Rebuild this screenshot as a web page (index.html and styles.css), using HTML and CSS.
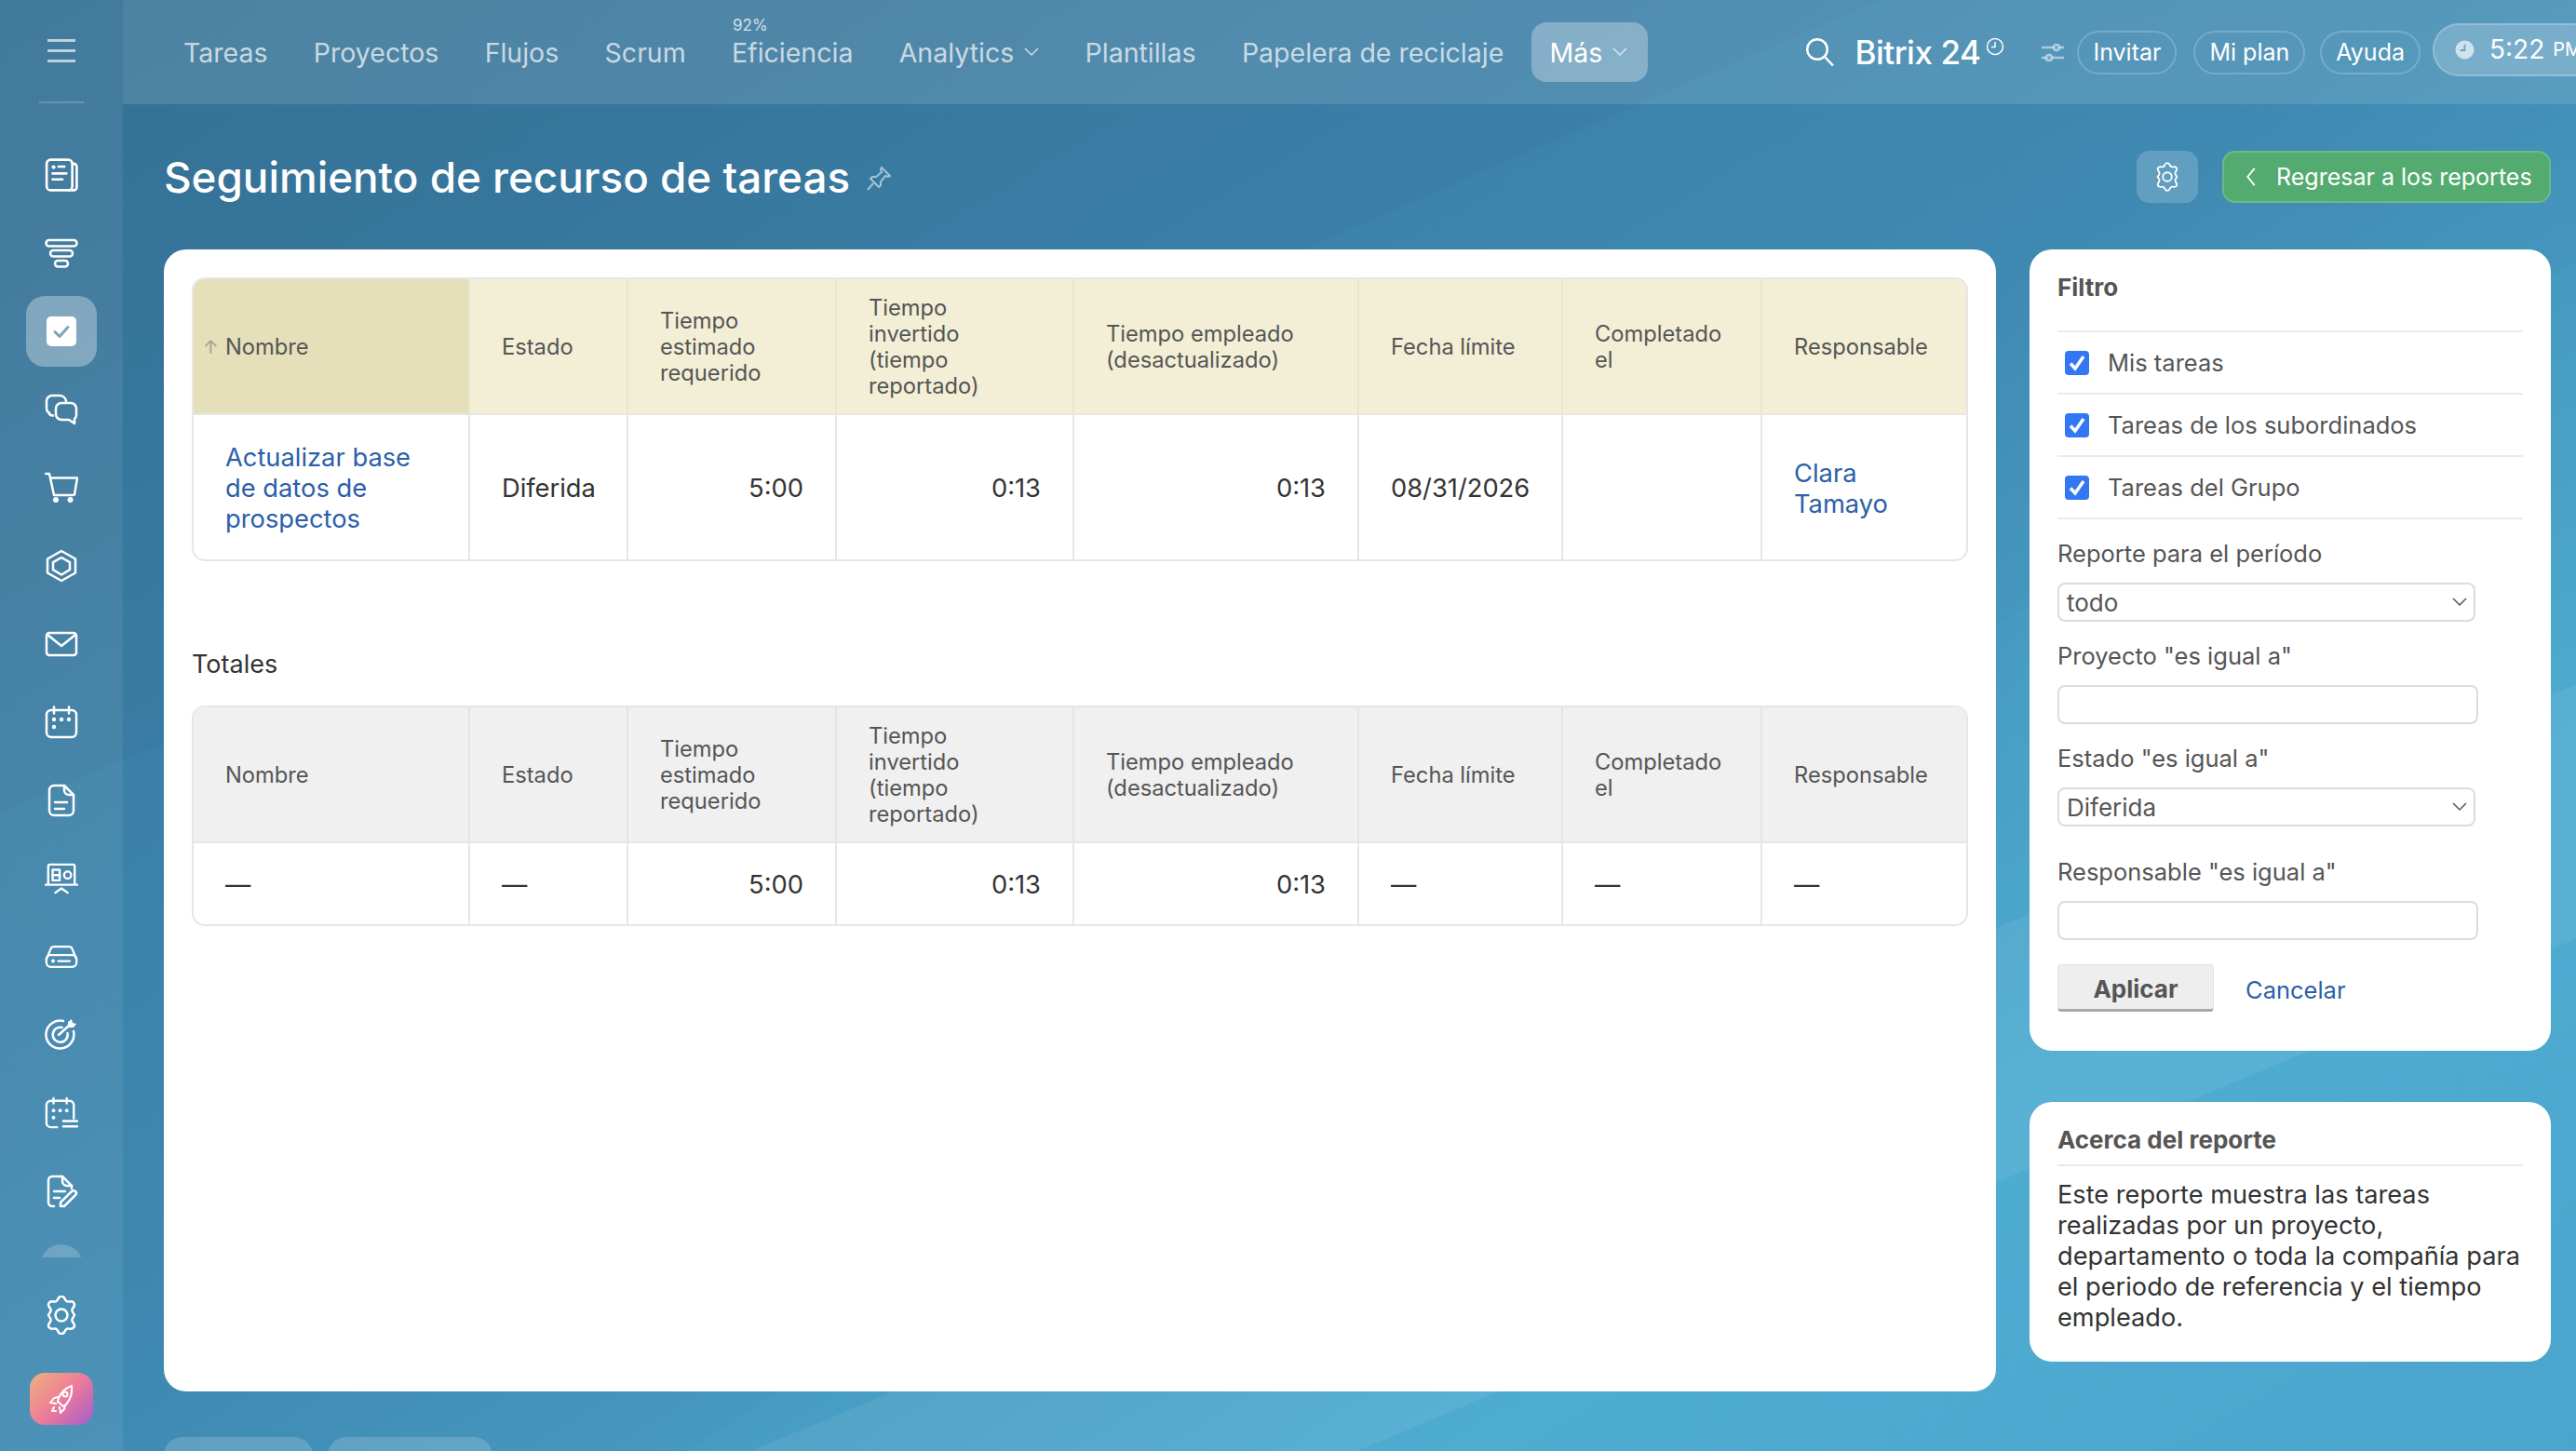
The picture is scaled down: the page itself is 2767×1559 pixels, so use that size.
FILE: index.html
```html
<!DOCTYPE html>
<html lang="es">
<head>
	<meta charset="utf-8">
	<title>Seguimiento de recurso de tareas</title>
	<link rel="stylesheet" href="styles.css">
</head>
<body>
<div class="app">
	<aside class="sidebar">
		<div class="burger"><span></span><span></span><span></span></div>
		<div class="side-divider"></div>
		<nav class="side-menu">
			<a class="side-item"><svg class="ico" viewBox="0 0 34 34"><rect x="2" y="1.500" width="26" height="31" rx="4"/><path d="M28 5.500h1.500a3 3 0 0 1 3 3v21a3 3 0 0 1-3 3h-5"/><circle class="dot" cx="9" cy="9" r="2"/><path d="M14 8.500h6M8 15.500h14M8 21.500h10"/></svg></a>
			<a class="side-item"><svg class="ico" viewBox="0 0 36 32"><rect x="1.500" y="2" width="33" height="6.500" rx="3.200"/><rect x="6" y="13" width="24" height="6.500" rx="3.200"/><rect x="11" y="24" width="14" height="6.500" rx="3.200"/></svg></a>
			<a class="side-item side-item-active"><span class="task-box"><svg viewBox="0 0 32 32"><path d="M9 16.500l5 5 9-10"/></svg></span></a>
			<a class="side-item"><svg class="ico" viewBox="0 0 36 34"><path d="M9 23.500c-1 0-3-.5-4-1.500v-1.500C3 20 2 18 2 15V8a6 6 0 0 1 6-6h8a7 7 0 0 1 7 6"/><path d="M18 10h10a6 6 0 0 1 6 6v7a5 5 0 0 1-2 4v5l-6-4h-8a6 6 0 0 1-6-6v-6a6 6 0 0 1 6-6z"/></svg></a>
			<a class="side-item"><svg class="ico" viewBox="0 0 36 34"><path d="M1 2h4l5 23h20M7 6.500h28l-3 18"/><circle class="dot" cx="12" cy="30" r="3"/><circle class="dot" cx="27.500" cy="30" r="3"/></svg></a>
			<a class="side-item"><svg class="ico" viewBox="0 0 36 36"><path d="M18 2l15 8.500v15L18 34 3 25.500v-15z"/><path d="M18 9l9 5.200v8L18 27.500 9 22.200v-8z"/></svg></a>
			<a class="side-item"><svg class="ico" viewBox="0 0 36 28"><rect x="2" y="2" width="32" height="24" rx="3"/><path d="M3 4l15 12L33 4"/></svg></a>
			<a class="side-item"><svg class="ico" viewBox="0 0 36 36"><rect x="2" y="5" width="32" height="29" rx="5"/><path d="M10 1.500v7M26 1.500v7"/><circle class="dot" cx="10" cy="15" r="2.200"/><circle class="dot" cx="18" cy="15" r="2.200"/><circle class="dot" cx="26" cy="15" r="2.200"/><circle class="dot" cx="10" cy="23" r="2.200"/></svg></a>
			<a class="side-item"><svg class="ico" viewBox="0 0 30 36"><path d="M18 2H7a5 5 0 0 0-5 5v22a5 5 0 0 0 5 5h16a5 5 0 0 0 5-5V12z"/><path d="M18 2v5a5 5 0 0 0 5 5h5M8 20h13M8 27h10"/></svg></a>
			<a class="side-item"><svg class="ico" viewBox="0 0 38 36"><path d="M4 25V4a2 2 0 0 1 2-2h26a2 2 0 0 1 2 2v21M1 25h36M12 34l7-5 7 5"/><rect x="9" y="8" width="8" height="12"/><path d="M9 14h8"/><circle cx="26" cy="14" r="4"/></svg></a>
			<a class="side-item"><svg class="ico" viewBox="0 0 40 28"><path d="M2 17l5-12a4 4 0 0 1 4-3h18a4 4 0 0 1 4 3l5 12"/><rect x="2" y="12" width="36" height="14" rx="5"/><circle class="dot" cx="10" cy="19" r="2.200"/><path d="M16 19h14"/></svg></a>
			<a class="side-item"><svg class="ico" viewBox="0 0 36 36"><path d="M31 14a15 15 0 1 1-11-11"/><path d="M24.500 16a8 8 0 1 1-6-6"/><path d="M15 18L27 7"/><path class="dot" d="M25 9V4l4-3 1 4 4 1-3 4h-5z"/></svg></a>
			<a class="side-item"><svg class="ico" viewBox="0 0 38 36"><path d="M14 34H7a5 5 0 0 1-5-5V9a5 5 0 0 1 5-5h21a5 5 0 0 1 5 5v15"/><path d="M10 1v6M25 1v6M21 27h16M21 33h16"/><circle class="dot" cx="10" cy="15" r="2"/><circle class="dot" cx="17.500" cy="15" r="2"/><circle class="dot" cx="25" cy="15" r="2"/><circle class="dot" cx="10" cy="23" r="2"/></svg></a>
			<a class="side-item"><svg class="ico" viewBox="0 0 32 36"><path d="M8 34H6a4 4 0 0 1-4-4V6a4 4 0 0 1 4-4h11l10 10v3"/><path d="M17 2v5a5 5 0 0 0 5 5h5M8 18h12M8 25h6"/><path d="M15 34v-4L27 18a2.500 2.500 0 0 1 4 4L19 34z"/></svg></a>
			<span class="side-more"></span>
		</nav>
		<div class="side-bottom">
			<a class="side-item"><svg class="ico ico-gear" viewBox="0 0 38 42"><path d="M16 2.500a3.500 3.500 0 0 1 6 0l1.500 2.500a3 3 0 0 0 3 1.500l3-.2a3.500 3.500 0 0 1 3 5.200L31 14a3 3 0 0 0 0 3.500l2 3.500-2 3.500a3 3 0 0 0 0 3.500l1.500 2.500a3.500 3.500 0 0 1-3 5.200l-3-.2a3 3 0 0 0-3 1.500L22 39.500a3.500 3.500 0 0 1-6 0L14.500 37a3 3 0 0 0-3-1.500l-3 .2a3.500 3.500 0 0 1-3-5.200L7 28a3 3 0 0 0 0-3.500L5 21l2-3.500a3 3 0 0 0 0-3.500L5.500 11.500a3.500 3.500 0 0 1 3-5.200l3 .2a3 3 0 0 0 3-1.500z"/><circle cx="19" cy="21" r="6.500"/></svg></a>
			<a class="rocket"><svg class="ico" viewBox="0 0 28 32"><path d="M25 2c1 8-1 14-6 20l-3 2-6-5 1-4C14 8 19 4 25 2z"/><circle cx="18" cy="11" r="2.500"/><path d="M11 14l-5 1-4 5 6 1M18 23l-1 4-4 4-1-6M6 25l-2 4 4 0"/></svg></a>
		</div>
	</aside>

	<div class="workspace">
		<header class="topbar">
			<nav class="top-nav">
				<a class="top-link">Tareas</a>
				<a class="top-link">Proyectos</a>
				<a class="top-link">Flujos</a>
				<a class="top-link">Scrum</a>
				<a class="top-link"><span class="top-counter">92%</span>Eficiencia</a>
				<a class="top-link">Analytics <svg class="caret" viewBox="0 0 16 10"><path d="M1 1l7 7 7-7"/></svg></a>
				<a class="top-link">Plantillas</a>
				<a class="top-link">Papelera de reciclaje</a>
				<a class="top-link top-link-more">Más <svg class="caret" viewBox="0 0 16 10"><path d="M1 1l7 7 7-7"/></svg></a>
			</nav>
			<div class="top-right">
				<svg class="search-ico" viewBox="0 0 30 30"><circle cx="12" cy="12" r="10.800"/><path d="M20 20l9 9.500"/></svg>
				<span class="brand">Bitrix<span class="brand-num">24</span></span>
				<svg class="brand-clock" viewBox="0 0 20 20"><circle cx="10" cy="10" r="8.500"/><path d="M10 5v5.500H6"/></svg>
				<svg class="tune-ico" viewBox="0 0 24 19"><path d="M0 4h24M0 15h24"/><circle cx="16" cy="4" r="3.200"/><circle cx="8" cy="15" r="3.200"/></svg>
				<a class="pill pill-invite">Invitar</a>
				<a class="pill pill-plan">Mi plan</a>
				<a class="pill pill-help">Ayuda</a>
				<div class="clock-pill">
					<svg class="clock-ico" viewBox="0 0 22 22"><circle cx="11" cy="11" r="10.500"/><path d="M11 5v6.500H6"/></svg>
					<span class="clock-time">5:22</span><span class="clock-ampm">PM</span>
				</div>
			</div>
		</header>

		<main class="page">
			<div class="page-head">
				<h1 class="page-title">Seguimiento de recurso de tareas</h1>
				<svg class="pin-ico" viewBox="0 0 28 28"><path d="M17 2l9 9-2 1-3-1-5 6 0 4-2 2-9-9 2-2h4l6-5-1-3z"/><path d="M8 19l-6 7"/></svg>
				<div class="page-actions">
					<button class="btn-gear"><svg viewBox="0 0 38 42"><path d="M16 2.500a3.500 3.500 0 0 1 6 0l1.500 2.500a3 3 0 0 0 3 1.500l3-.2a3.500 3.500 0 0 1 3 5.200L31 14a3 3 0 0 0 0 3.500l2 3.500-2 3.500a3 3 0 0 0 0 3.500l1.500 2.500a3.500 3.500 0 0 1-3 5.200l-3-.2a3 3 0 0 0-3 1.500L22 39.500a3.500 3.500 0 0 1-6 0L14.500 37a3 3 0 0 0-3-1.500l-3 .2a3.500 3.500 0 0 1-3-5.200L7 28a3 3 0 0 0 0-3.500L5 21l2-3.500a3 3 0 0 0 0-3.500L5.500 11.500a3.500 3.500 0 0 1 3-5.200l3 .2a3 3 0 0 0 3-1.500z"/><circle cx="19" cy="21" r="6.500"/></svg></button>
					<a class="btn-back"><svg viewBox="0 0 12 24"><path d="M10 2L2 12l8 10"/></svg>Regresar a los reportes</a>
				</div>
			</div>

			<div class="columns">
				<section class="report-card">
					<div class="table-wrap">
						<table class="report-table report-table-main">
							<colgroup><col class="c-name"><col class="c-state"><col class="c-est"><col class="c-spent"><col class="c-used"><col class="c-due"><col class="c-done"><col class="c-owner"></colgroup>
							<thead>
								<tr>
									<th class="sorted"><span class="sort-arrow">&#8593;</span>Nombre</th>
									<th>Estado</th>
									<th>Tiempo estimado requerido</th>
									<th class="th-spent">Tiempo invertido (tiempo reportado)</th>
									<th>Tiempo empleado (desactualizado)</th>
									<th>Fecha límite</th>
									<th>Completado el</th>
									<th>Responsable</th>
								</tr>
							</thead>
							<tbody>
								<tr>
									<td class="td-name"><a class="link">Actualizar base de datos de prospectos</a></td>
									<td>Diferida</td>
									<td class="num">5:00</td>
									<td class="num">0:13</td>
									<td class="num">0:13</td>
									<td>08/31/2026</td>
									<td></td>
									<td><a class="link">Clara Tamayo</a></td>
								</tr>
							</tbody>
						</table>
					</div>

					<h2 class="totals-title">Totales</h2>
					<div class="table-wrap">
						<table class="report-table report-table-totals">
							<colgroup><col class="c-name"><col class="c-state"><col class="c-est"><col class="c-spent"><col class="c-used"><col class="c-due"><col class="c-done"><col class="c-owner"></colgroup>
							<thead>
								<tr>
									<th>Nombre</th>
									<th>Estado</th>
									<th>Tiempo estimado requerido</th>
									<th class="th-spent">Tiempo invertido (tiempo reportado)</th>
									<th>Tiempo empleado (desactualizado)</th>
									<th>Fecha límite</th>
									<th>Completado el</th>
									<th>Responsable</th>
								</tr>
							</thead>
							<tbody>
								<tr>
									<td>—</td>
									<td>—</td>
									<td class="num">5:00</td>
									<td class="num">0:13</td>
									<td class="num">0:13</td>
									<td>—</td>
									<td>—</td>
									<td>—</td>
								</tr>
							</tbody>
						</table>
					</div>
				</section>

				<aside class="side-panels">
					<form class="panel panel-filter" action="#">
						<h3 class="panel-title panel-title-filter">Filtro</h3>
						<label class="check-row"><span class="check"><svg viewBox="0 0 26 26"><path d="M6 13.500l5 5.500 9-13"/></svg></span>Mis tareas</label>
						<label class="check-row"><span class="check"><svg viewBox="0 0 26 26"><path d="M6 13.500l5 5.500 9-13"/></svg></span>Tareas de los subordinados</label>
						<label class="check-row"><span class="check"><svg viewBox="0 0 26 26"><path d="M6 13.500l5 5.500 9-13"/></svg></span>Tareas del Grupo</label>

						<label class="field-label" for="f-period">Reporte para el período</label>
						<select class="field-select" id="f-period"><option>todo</option></select>
						<label class="field-label" for="f-project">Proyecto "es igual a"</label>
						<input class="field-input" id="f-project" type="text">
						<label class="field-label" for="f-state">Estado "es igual a"</label>
						<select class="field-select" id="f-state"><option>Diferida</option></select>
						<label class="field-label field-label-owner" for="f-owner">Responsable "es igual a"</label>
						<input class="field-input" id="f-owner" type="text">

						<div class="form-actions">
							<button class="btn-apply" type="submit">Aplicar</button>
							<a class="link btn-cancel">Cancelar</a>
						</div>
					</form>

					<section class="panel panel-about">
						<h3 class="panel-title panel-title-about">Acerca del reporte</h3>
						<p class="about-text">Este reporte muestra las tareas realizadas por un proyecto, departamento o toda la compañía para el periodo de referencia y el tiempo empleado.</p>
					</section>
				</aside>
			</div>

			<div class="bottom-tabs">
				<span class="bottom-tab bottom-tab-a"></span>
				<span class="bottom-tab bottom-tab-b"></span>
			</div>
		</main>
	</div>
</div>
</body>
</html>
```

FILE: styles.css
```css
* {
	box-sizing: border-box;
}
html, body {
	height: 100%;
}
body {
	margin: 0;
	overflow: hidden;
	font-family: Inter, "Noto Sans", sans-serif;
	font-size: 25.500px;
	line-height: 33px;
	color: #333;
	background:
		linear-gradient(157.200deg, transparent 1750px, rgba(255, 255, 255, .06) 1750px, rgba(255, 255, 255, .06) 2002px, transparent 2002px),
		linear-gradient(147.800deg, transparent 1712px, rgba(90, 190, 225, .08) 1712px),
		linear-gradient(156.600deg, transparent 802px, rgba(70, 170, 200, .1) 802px),
		linear-gradient(149deg, #337095 0, #367499 330px, #3e86b0 1370px, #4fabd1 2140px, #4da7ce 2400px, #4aa2cb 2761px);
}
a {
	text-decoration: none;
}
.app {
	display: grid;
	grid-template-columns: 132px 1fr;
	height: 100%;
}

/* sidebar */
.sidebar {
	display: flex;
	flex-direction: column;
	align-items: center;
	height: 1559px;
	overflow: hidden;
	background-color: rgba(255, 255, 255, .07);
}
.burger {
	display: flex;
	flex-direction: column;
	gap: 8px;
	margin-top: 42px;
}
.burger span {
	display: block;
	width: 30px;
	height: 3px;
	background-color: rgba(255, 255, 255, .65);
}
.side-divider {
	width: 48px;
	height: 2px;
	margin-top: 42px;
	background-color: rgba(255, 255, 255, .2);
}
.side-menu {
	display: flex;
	flex-direction: column;
	align-items: center;
	height: 1240px;
	overflow: hidden;
	padding-top: 35px;
}
.side-item {
	display: flex;
	align-items: center;
	justify-content: center;
	flex: none;
	width: 76px;
	height: 84px;
}
.side-item-active {
	height: 76px;
	margin: 4px 0;
	border-radius: 20px;
	background-color: rgba(255, 255, 255, .33);
}
.ico {
	width: 36px;
	height: 36px;
	fill: none;
	stroke: #fff;
	stroke-width: 2.500;
	stroke-linecap: round;
	stroke-linejoin: round;
}
.ico .dot {
	fill: #fff;
	stroke: none;
}
.ico-gear {
	width: 38px;
	height: 42px;
}
.task-box {
	display: flex;
	width: 32px;
	height: 32px;
	border-radius: 5px;
	background-color: #fff;
}
.task-box svg {
	fill: none;
	stroke: #7fa3b8;
	stroke-width: 3;
	stroke-linecap: round;
	stroke-linejoin: round;
}
.side-more {
	flex: none;
	width: 46px;
	height: 46px;
	margin-top: 15px;
	border-radius: 50%;
	background-color: rgba(255, 255, 255, .2);
}
.side-bottom {
	display: flex;
	flex-direction: column;
	align-items: center;
	gap: 20px;
	margin-top: 20px;
}
.rocket {
	display: flex;
	align-items: center;
	justify-content: center;
	width: 68px;
	height: 56px;
	border-radius: 16px;
	background: linear-gradient(135deg, #eeb27d 0%, #ee7c98 50%, #a45ccc 100%);
}
.rocket .ico {
	width: 28px;
	height: 32px;
	stroke-width: 2;
}

/* top bar */
.workspace {
	display: flex;
	flex-direction: column;
	min-width: 0;
	overflow: hidden;
}
.topbar {
	display: flex;
	flex: none;
	align-items: center;
	justify-content: space-between;
	height: 112px;
	padding-left: 65px;
	background-color: rgba(255, 255, 255, .12);
}
.top-nav {
	display: flex;
	align-items: center;
	gap: 49.300px;
}
.top-link {
	position: relative;
	display: flex;
	align-items: center;
	gap: 11px;
	font-size: 28.500px;
	color: rgba(255, 255, 255, .7);
	white-space: nowrap;
}
.top-counter {
	position: absolute;
	top: -22px;
	left: 1px;
	font-size: 17px;
	line-height: 18px;
	color: rgba(255, 255, 255, .75);
}
.caret {
	width: 16px;
	height: 10px;
	fill: none;
	stroke: currentColor;
	stroke-width: 1.500;
}
.top-link-more {
	height: 64px;
	margin-left: -20px;
	padding: 0 22px 0 20px;
	border-radius: 16px;
	color: #fff;
	background-color: rgba(255, 255, 255, .3);
}
.top-link-more .caret {
	stroke: rgba(255, 255, 255, .7);
}
.top-right {
	display: flex;
	flex: none;
	align-items: center;
	margin-right: -36px;
}
.search-ico {
	width: 30px;
	height: 30px;
	fill: none;
	stroke: #fff;
	stroke-width: 2.500;
}
.brand {
	margin-left: 22px;
	font-size: 35px;
	font-weight: 500;
	color: #fff;
	white-space: nowrap;
	letter-spacing: -.5px;
}
.brand-num {
	margin-left: 9px;
}
.brand-clock {
	align-self: flex-start;
	width: 20px;
	height: 20px;
	margin: 9px 0 0 6px;
	fill: none;
	stroke: #fff;
	stroke-width: 1.500;
}
.tune-ico {
	width: 24px;
	height: 19px;
	margin: 0 14px 0 40px;
	fill: #6ea6c6;
	stroke: rgba(255, 255, 255, .5);
	stroke-width: 2.500;
}
.pill {
	display: flex;
	align-items: center;
	height: 47px;
	padding: 0 15px;
	border: 2px solid rgba(255, 255, 255, .2);
	border-radius: 24px;
	font-size: 25px;
	color: #fff;
	white-space: nowrap;
}
.pill-invite {
	margin-right: 18px;
}
.pill-plan {
	margin-right: 16px;
}
.pill-help {
	margin-right: 13px;
}
.clock-pill {
	display: flex;
	align-items: center;
	width: 190px;
	height: 57px;
	margin-top: -6px;
	padding-left: 22px;
	border: 2px solid rgba(255, 255, 255, .2);
	border-radius: 28px;
	background-color: rgba(255, 255, 255, .2);
	color: #fff;
}
.clock-ico {
	width: 21px;
	height: 21px;
	fill: rgba(255, 255, 255, .65);
}
.clock-ico path {
	fill: none;
	stroke: #6fa5c4;
	stroke-width: 2;
}
.clock-time {
	margin-left: 16px;
	font-size: 28px;
}
.clock-ampm {
	margin-left: 9px;
	font-size: 20px;
}

/* page */
.page {
	flex: 1;
	padding: 0 27px 0 44px;
}
.page-head {
	display: flex;
	align-items: center;
	height: 156px;
}
.page-title {
	margin: 2px 0 0;
	font-size: 45.800px;
	line-height: 60px;
	font-weight: 500;
	color: #fff;
}
.pin-ico {
	width: 28px;
	height: 28px;
	margin: 4px 0 0 17px;
	fill: none;
	stroke: rgba(255, 255, 255, .55);
	stroke-width: 2;
}
.page-actions {
	display: flex;
	gap: 26px;
	margin-left: auto;
}
.btn-gear {
	display: flex;
	align-items: center;
	justify-content: center;
	width: 66px;
	height: 56px;
	padding: 0;
	border: 0;
	border-radius: 14px;
	background-color: rgba(255, 255, 255, .18);
}
.btn-gear svg {
	width: 28px;
	height: 32px;
	fill: none;
	stroke: #fff;
	stroke-width: 2.500;
}
.btn-back {
	display: flex;
	align-items: center;
	gap: 21px;
	width: 353px;
	height: 56px;
	padding-left: 23px;
	border: 2px solid #6dba87;
	border-radius: 14px;
	font-size: 25px;
	color: #fff;
	white-space: nowrap;
	background-color: #54ab70;
}
.btn-back svg {
	width: 12px;
	height: 22px;
	fill: none;
	stroke: #fff;
	stroke-width: 2;
}
.columns {
	display: flex;
	gap: 36px;
}
.report-card {
	flex: 1;
	height: 1227px;
	padding: 30px;
	border-radius: 24px;
	background-color: #fff;
}
.table-wrap {
	overflow: hidden;
	border: 2px solid #e6e6e6;
	border-radius: 14px;
}
.report-table {
	width: 100%;
	border-collapse: collapse;
	table-layout: fixed;
	font-size: 27.300px;
}
.c-name { width: 296px; }
.c-state { width: 170px; }
.c-est { width: 224px; }
.c-spent { width: 255px; }
.c-used { width: 306px; }
.c-due { width: 219px; }
.c-done { width: 214px; }
.report-table th {
	height: 145px;
	padding: 2px 30px 0 34px;
	border-left: 2px solid #ebe7cf;
	border-bottom: 2px solid #e6e6e6;
	font-size: 23.700px;
	line-height: 28px;
	font-weight: 400;
	text-align: left;
	color: #555;
	background-color: #f3efd6;
}
.report-table th.th-spent {
	padding-right: 60px;
}
.report-table th:first-child,
.report-table td:first-child {
	border-left: 0;
}
.report-table th.sorted {
	background-color: #e5e0ba;
	border-right: 1px solid #dcd7b0;
}
.sort-arrow {
	position: absolute;
	margin-left: -24px;
	color: #a5a28c;
	font-size: 20px;
}
.report-table td {
	height: 156px;
	padding: 2px 34px 0;
	border-left: 2px solid #e6e6e6;
	vertical-align: middle;
}
.report-table td.td-name {
	padding-right: 56px;
}
.report-table td.num {
	text-align: right;
}
.report-table-totals th {
	border-left-color: #e4e4e4;
	background-color: #f0f0f0;
}
.report-table-totals td {
	height: 88px;
}
.link {
	color: #2b5fa8;
}
.totals-title {
	margin: 94px 0 28px;
	font-size: 27px;
	line-height: 33px;
	font-weight: 400;
}

/* right column */
.side-panels {
	display: flex;
	flex: none;
	flex-direction: column;
	gap: 55px;
	width: 560px;
}
.panel {
	display: block;
	padding: 0 30px;
	border-radius: 24px;
	background-color: #fff;
}
.panel-title {
	margin: 0;
	border-bottom: 2px solid #ebebeb;
	font-size: 26px;
	font-weight: 700;
	color: #555;
}
.panel-title-filter {
	height: 89px;
	padding-top: 24px;
}
.check-row {
	display: flex;
	align-items: center;
	gap: 20px;
	height: 67px;
	padding-left: 8px;
	border-bottom: 2px solid #ebebeb;
	color: #555;
}
.check {
	display: flex;
	flex: none;
	width: 26px;
	height: 26px;
	border-radius: 4px;
	background-color: #3377f5;
}
.check svg {
	fill: none;
	stroke: #fff;
	stroke-width: 3.500;
}
.field-label {
	display: block;
	height: 33px;
	margin: 20px 0 15px;
	color: #555;
}
.field-label-owner {
	margin-top: 32px;
}
.field-select,
.field-input {
	display: block;
	height: 42px;
	margin: 0;
	border: 2px solid #dcdcdc;
	border-radius: 8px;
	font-family: inherit;
	font-size: 26px;
	color: #555;
	background-color: #fff;
}
.field-select {
	width: 449px;
	padding: 0 8px;
	appearance: none;
	background-image: url("data:image/svg+xml,%3Csvg xmlns='http://www.w3.org/2000/svg' width='16' height='10'%3E%3Cpath d='M1 1l7 7 7-7' fill='none' stroke='%23555' stroke-width='1.500'/%3E%3C/svg%3E");
	background-repeat: no-repeat;
	background-position: right 7px center;
}
.field-input {
	width: 452px;
}
.form-actions {
	display: flex;
	align-items: center;
	gap: 34px;
	margin-top: 26px;
	padding-bottom: 42px;
}
.btn-apply {
	width: 168px;
	height: 51px;
	padding: 4px 0 0;
	border: 1px solid #e3e3e3;
	border-bottom: 3px solid #a9a9a9;
	border-radius: 4px;
	font-family: inherit;
	font-size: 26px;
	font-weight: 700;
	color: #555;
	background-color: #eee;
}
.btn-cancel {
	margin-top: 4px;
}
.panel-about {
	height: 279px;
}
.panel-title-about {
	height: 69px;
	padding-top: 24px;
}
.about-text {
	margin: 14px 0 0;
	font-size: 27.200px;
}
.bottom-tabs {
	display: flex;
	gap: 16px;
	margin-top: 49px;
}
.bottom-tab {
	height: 40px;
	border-radius: 20px 20px 0 0;
	background-color: rgba(255, 255, 255, .17);
}
.bottom-tab-a {
	width: 160px;
}
.bottom-tab-b {
	width: 177px;
}
```
